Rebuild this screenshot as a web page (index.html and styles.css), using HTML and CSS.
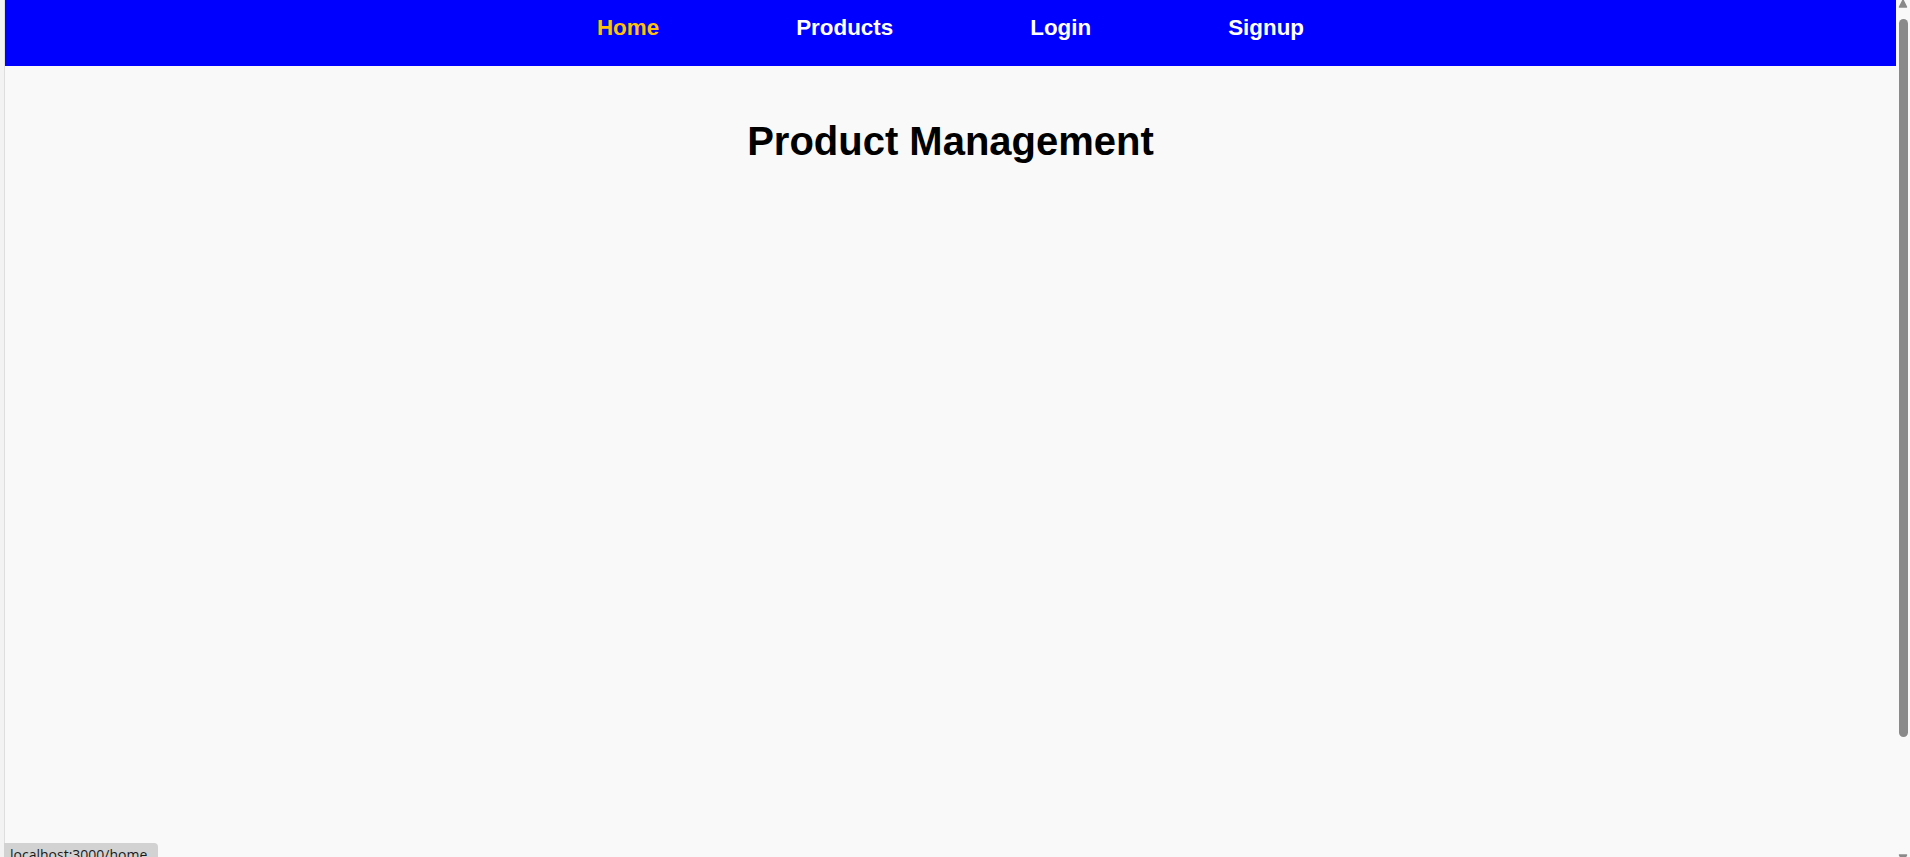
FILE: index.html
```html
<!DOCTYPE html>
<html lang="en">
<head>
<meta charset="utf-8">
<title>Product Management</title>
<link rel="stylesheet" href="styles.css">
</head>
<body>
<div class="app">
  <nav class="navbar">
    <a class="nav-link active" href="#">Home</a>
    <a class="nav-link" href="#">Products</a>
    <a class="nav-link" href="#">Login</a>
    <a class="nav-link" href="#">Signup</a>
  </nav>
  <main class="content">
    <h1 class="title">Product Management</h1>
  </main>
</div>
<div class="scrollbar" aria-hidden="true">
  <svg class="scroll-arrow" width="14" height="12" viewBox="0 0 14 12"><path d="M3.5 9 L10.5 9 L7 2 Z" fill="#8a8a8a" stroke="#8a8a8a" stroke-width="1.5" stroke-linejoin="round"/></svg>
  <div class="scroll-thumb"></div>
  <div class="scroll-space"></div>
  <svg class="scroll-arrow" width="14" height="12" viewBox="0 0 14 12"><path d="M3.5 3 L10.5 3 L7 10 Z" fill="#8a8a8a" stroke="#8a8a8a" stroke-width="1.5" stroke-linejoin="round"/></svg>
</div>
<div class="status-bar">localhost:3000/home</div>
</body>
</html>
```
FILE: styles.css
```css
html {
  overflow: hidden;
  background: #f3f3f3;
}

body {
  margin: 0;
  font-family: "Liberation Sans", Arial, sans-serif;
  background: #f3f3f3;
}

.app {
  margin-left: 4px;
  margin-right: 14px;
  border-left: 1px solid #dedede;
  background: #f9f9f9;
  min-height: 100vh;
}

.navbar {
  box-sizing: border-box;
  height: 66px;
  background: #0000ff;
  display: flex;
  justify-content: center;
  align-items: flex-start;
  gap: 137px;
  padding-top: 15px;
}

.nav-link {
  color: #ffffff;
  text-decoration: none;
  font-weight: bold;
  font-size: 22.4px;
}

.nav-link.active {
  color: #ffc107;
}

.content {
  padding-top: 53px;
  text-align: center;
}

.title {
  margin: 0;
  font-size: 40px;
  font-weight: bold;
  color: #000000;
}

.scrollbar {
  position: fixed;
  top: 0;
  right: 0;
  width: 14px;
  height: 100vh;
  background: #f9f9f9;
  display: flex;
  flex-direction: column;
  align-items: center;
}

.scroll-arrow {
  display: block;
  flex: none;
}

.scroll-arrow:first-child {
  margin-top: -2px;
}

.scroll-thumb {
  flex: none;
  margin-top: 9px;
  margin-left: 1px;
  width: 9px;
  height: 718px;
  background: #8a8a8a;
  border-radius: 5px;
}

.scroll-space {
  flex: 1;
}

.scroll-arrow:last-child {
  margin-bottom: -7px;
}

.status-bar {
  position: fixed;
  left: 4px;
  bottom: -10px;
  box-sizing: border-box;
  width: 154px;
  height: 24px;
  padding: 3px 0 0 6px;
  background: #d2d2d2;
  border-top-right-radius: 4px;
  font-family: "Open Sans", "Noto Sans", sans-serif;
  font-size: 14px;
  line-height: 18px;
  color: #1a1a1a;
  white-space: nowrap;
  overflow: hidden;
}
```
